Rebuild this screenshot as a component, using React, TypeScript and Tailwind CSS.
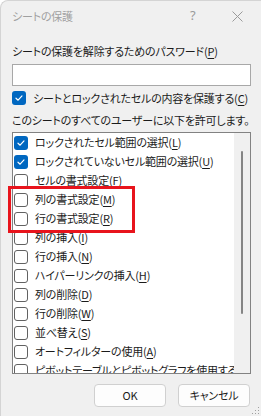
import React from "react";

const font = "[font-family:'Noto_Sans_CJK_JP','Noto_Sans',sans-serif] [font-feature-settings:'palt']";

function Check({ checked }: { checked: boolean }) {
  if (checked) {
    return (
      <div className="w-[14px] h-[14px] rounded-[3px] bg-[#0067c0] flex items-center justify-center shrink-0">
        <svg width="10" height="10" viewBox="0 0 10 10">
          <path d="M2 5.2 L4.1 7.2 L8 2.9" stroke="white" strokeWidth="1.2" fill="none" strokeLinecap="round" strokeLinejoin="round" />
        </svg>
      </div>
    );
  }
  return <div className="w-[14px] h-[14px] rounded-[3px] border border-[#616161] bg-white shrink-0" />;
}

function Label({ text, k }: { text: string; k: string }) {
  return (
    <span>
      {text}(<span className="underline underline-offset-2">{k}</span>)
    </span>
  );
}

const items: [string, string, boolean][] = [
  ["ロックされたセル範囲の選択", "L", true],
  ["ロックされていないセル範囲の選択", "U", true],
  ["セルの書式設定", "F", false],
  ["列の書式設定", "M", false],
  ["行の書式設定", "R", false],
  ["列の挿入", "I", false],
  ["行の挿入", "N", false],
  ["ハイパーリンクの挿入", "H", false],
  ["列の削除", "D", false],
  ["行の削除", "W", false],
  ["並べ替え", "S", false],
  ["オートフィルターの使用", "A", false],
];

export default function App() {
  return (
    <div className={`w-[261px] h-[416px] bg-[#f0f0f0] border-l border-t border-[#d4d4d4] rounded-tl-[8px] overflow-hidden relative text-[11px] tracking-[-0.2px] text-[#1b1b1b] ${font}`}>
      {/* title bar */}
      <div className="h-[30px] flex items-center pl-[11px] text-[#a0a0a0] relative">
        <span className="leading-none">シートの保護</span>
        <span className="absolute left-[189px] top-[8px] text-[13px] leading-none text-[#9a9a9a] [font-family:'Noto_Sans',sans-serif]">?</span>
        <svg className="absolute left-[231px] top-[10px]" width="11" height="11" viewBox="0 0 11 11">
          <path d="M0.5 0.5 L10.5 10.5 M10.5 0.5 L0.5 10.5" stroke="#9a9a9a" strokeWidth="1" />
        </svg>
      </div>

      <div className="pl-[11px] pr-[10px] flex flex-col">
        <div className="h-[20px] mt-[10px] flex items-center leading-none">
          <Label text="シートの保護を解除するためのパスワード" k="P" />
        </div>
        <div className="h-[22px] mt-[3px] bg-white border border-[#a8a8a8]" />
        <div className="h-[20px] mt-[2px] flex items-center gap-[7px] leading-none whitespace-nowrap">
          <Check checked />
          <Label text="シートとロックされたセルの内容を保護する" k="C" />
        </div>
        <div className="h-[20px] mt-[2px] flex items-center leading-none whitespace-nowrap">
          このシートのすべてのユーザーに以下を許可します。
        </div>
        <div className="h-[242px] mt-[2px] bg-white border border-[#828282] flex overflow-hidden">
          <div className="flex-1 flex flex-col overflow-hidden">
            {items.map(([t, k, c]) => (
              <div key={k} className="h-[19px] shrink-0 flex items-center gap-[7px] pl-[1px] leading-none whitespace-nowrap">
                <Check checked={c} />
                <Label text={t} k={k} />
              </div>
            ))}
            <div className="h-[19px] shrink-0 flex items-center gap-[7px] pl-[1px] leading-none whitespace-nowrap">
              <Check checked={false} />
              <span>ピボットテーブルとピボットグラフを使用する</span>
            </div>
          </div>
          <div className="w-[16px] bg-[#f0f0f0] shrink-0 flex justify-center pt-[18px]">
            <div className="w-[2px] h-[163px] bg-[#858585] rounded-full" />
          </div>
        </div>
        <div className="flex justify-end gap-[12px] mt-[10px] pr-[1px]">
          <button className="w-[72px] h-[23px] bg-[#fdfdfd] border border-[#d0d0d0] rounded-[4px] leading-none text-[11px] text-[#1b1b1b]">OK</button>
          <button className="w-[72px] h-[23px] bg-[#fdfdfd] border border-[#d0d0d0] rounded-[4px] leading-none text-[11px] text-[#1b1b1b]">キャンセル</button>
        </div>
      </div>

      {/* red highlight */}
      <div className="absolute left-[7px] top-[185px] w-[127px] h-[47px] border-[3px] border-[#e8141c]" />

      {/* resize grip */}
      <svg className="absolute right-[1px] bottom-[1px]" width="9" height="9" viewBox="0 0 9 9">
        <rect x="7" y="1" width="1" height="1" fill="#a0a0a0" />
        <rect x="4" y="4" width="1" height="1" fill="#a0a0a0" />
        <rect x="7" y="4" width="1" height="1" fill="#a0a0a0" />
        <rect x="1" y="7" width="1" height="1" fill="#a0a0a0" />
        <rect x="4" y="7" width="1" height="1" fill="#a0a0a0" />
        <rect x="7" y="7" width="1" height="1" fill="#a0a0a0" />
      </svg>
    </div>
  );
}
